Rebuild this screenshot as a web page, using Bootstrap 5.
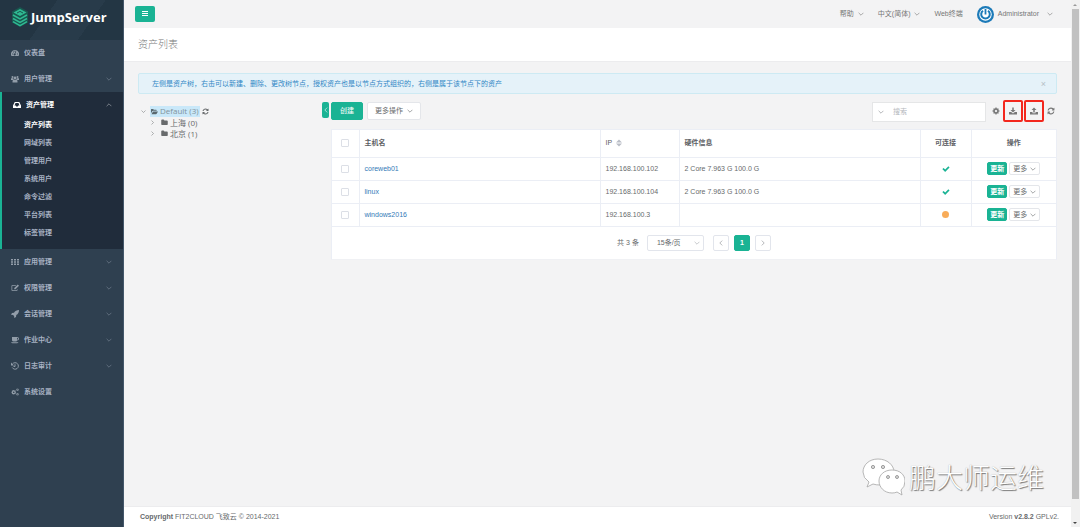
<!DOCTYPE html>
<html lang="zh-CN">
<head>
<meta charset="utf-8">
<meta name="viewport" content="width=device-width, initial-scale=1">
<title>JumpServer - 资产列表</title>
<link href="https://cdn.jsdelivr.net/npm/bootstrap@5.3.0/dist/css/bootstrap.min.css" rel="stylesheet">
<script src="https://cdn.jsdelivr.net/npm/bootstrap@5.3.0/dist/js/bootstrap.bundle.min.js"></script>
<style>
:root { --brand: #1ab394; --ink: #676a6c; --edge: #ebeef5; }
body { font: 7px/10px "Liberation Sans", "Noto Sans CJK SC", sans-serif; color: var(--ink); background: #f3f3f4; }
a { color: inherit; text-decoration: none; }
h1, ul, p { margin: 0; padding: 0; }
ul { list-style: none; }
svg { display: block; flex: none; }
.ic { width: 8px; height: 8px; fill: currentColor; }
.chev { width: 6px; height: 6px; fill: none; stroke: currentColor; stroke-width: 1; }
.line { fill: none; stroke: currentColor; stroke-width: 2; }
button, input, select { font: inherit; color: inherit; }

.side { width: 124px; background: #2f4050; color: #a7b1c2; font-weight: 600; border-right: 1px solid #44576a; }
.brand { height: 40px; padding-left: 11px; gap: 2px; background: linear-gradient(125deg, #233543 0 38%, #283b4a 38% 70%, #233644 70%); color: #fff; font: 700 13px/18px "Open Sans", sans-serif; padding-bottom: 6px; }
.side-item { height: 26px; padding: 0 11px; gap: 5px; }
.side-item .chev { margin-left: auto; opacity: .65; }
.side-item .ic { color: #929da9; }
.side-open { background: #202c3b; border-left: 2px solid var(--brand); padding-bottom: 7px; }
.side-open .side-item { height: 24px; padding-top: 2px; color: #fff; }
.side-open .side-item .ic { color: #fff; }
.side-open li a { display: flex; align-items: center; height: 18px; padding-left: 22px; }
.side-open li a.active { color: #fff; }

.topbar { height: 28px; padding: 0 18px 0 11px; color: #777; }
.topnav { gap: 14px; }
.menu-btn { width: 20px; height: 16px; border: 0; border-radius: 2px; background: var(--brand); color: #fff; }
.heading { height: 34px; padding: 0 14px; background: #fff; border-bottom: 1px solid #ececee; }
.heading h1 { font-size: 10px; line-height: 16px; font-weight: 300; color: #777; }
.content { padding: 11px 14px 0; }
.tip { height: 21px; padding: 0 10px 0 13px; border: 1px solid #cdeaf3; border-radius: 2px; background: #e5f2f9; color: #2f86c5; }
.tip button { border: 0; background: none; padding: 0; color: #b6c0c6; font-size: 9px; }
.tree { width: 184px; padding: 3px 0 0 3px; font-family: "Open Sans", "Noto Sans CJK SC", sans-serif; font-size: 8px; }
.tree .node { height: 12px; gap: 2px; }
.tree .node + .node { height: 11px; }
.tree .sub { padding-left: 9px; }
.tree .chev { width: 5px; height: 5px; margin-right: 2px; }
.tree .sub .chev { margin-right: 4px; }
.tree .ic { width: 7px; height: 7px; }
.tree .on { background: #c9e8f9; height: 11px; padding: 0 1px; gap: 2px; color: #82939c; }
.tree .on .ic { color: #59676e; }
.fold { width: 7px; height: 16px; border: 0; border-radius: 2px; padding: 0; margin-right: 2px; background: var(--brand); color: #fff; }
.tools { height: 27px; }
.act { height: 18px; border: 1px solid #e4e6ea; border-radius: 2px; background: #fff; padding: 0 7px; gap: 4px; }
.act.main { background: var(--brand); border-color: var(--brand); color: #fff; }
.find { width: 114px; height: 20px; border: 1px solid #e5e6e7; background: #fff; padding: 0 5px; }
.find button { border: 0; background: none; padding: 0; color: #85888d; }
.find input { width: 80px; border: 0; padding: 0; margin-left: 9px; outline: 0; background: none; }
.find input::placeholder { color: #b5b8bd; }
.icons { height: 18px; gap: 1px; }
.tool { width: 12px; height: 18px; border: 0; padding: 0; background: none; color: #777; }
.tool.marked { width: 20px; height: 22px; border: 2px solid #f3271d; border-radius: 2px; }
.panel { background: #fff; border: 1px solid var(--edge); border-bottom-color: #f0f1f4; }
.assets { width: 100%; table-layout: fixed; border-collapse: collapse; margin: 0; }
.assets th, .assets td { border: 1px solid var(--edge); border-width: 0 1px 1px 0; height: 23px; padding: 0 5px; vertical-align: middle; }
.assets th { height: 27px; font-weight: 600; color: #5d6064; }
.assets th.thin { font-weight: 400; }
.assets tr > :last-child { border-right: 0; }
.assets a { color: #337ab7; }
.assets input { appearance: none; display: block; width: 8px; height: 8px; margin: 0 auto; border: 1px solid #dcdfe6; border-radius: 1px; background: #fff; }
.mini { height: 13px; border: 1px solid #e4e6ea; border-radius: 2px; background: #fff; padding: 0 2px; gap: 3px; }
.mini + .mini { margin-left: 2px; padding: 0 3px; }
.mini.main { background: var(--brand); border-color: var(--brand); color: #fff; font-weight: 600; }
.dot { width: 7px; height: 7px; border-radius: 50%; background: #f8ac59; }
.pages { height: 32px; }
.pages button, .pages select { height: 16px; border: 1px solid #e2e5ec; border-radius: 2px; background: #fff; padding: 0; }
.pages button { width: 16px; color: #85888d; margin-left: 5px; }
.pages button.now { background: var(--brand); border-color: var(--brand); color: #fff; font-weight: 700; }
.pages select { width: 57px; appearance: none; padding-left: 9px; }
.pages .drop { position: absolute; right: 4px; top: 5px; color: #a5a8ad; pointer-events: none; }
.foot { height: 21px; padding: 0 12px 0 16px; background: #fff; border-top: 1px solid #ececee; }
.foot b { font-weight: 700; }
.rail { width: 9px; background: #f1f1f1; color: #555; padding: 0 1px; }
.rail .thumb { background: #c1c1c1; flex: 0 1 490px; width: 7px; }
.rail svg { width: 6px; height: 9px; }
.sign { padding: 0 27px 10px; gap: 4px; font: 300 27px/36px "Noto Sans CJK SC", sans-serif; color: #fff; text-shadow: 1px 1px 1px #777, 0 0 1px #aaa; }
.sign svg { width: 43px; height: 38px; }
</style>
</head>
<body>
<svg class="d-none" aria-hidden="true">
<symbol id="down" viewBox="0 0 10 10"><path d="M1 3l4 4 4-4"/></symbol>
<symbol id="up" viewBox="0 0 10 10"><path d="M1 7l4-4 4 4"/></symbol>
<symbol id="right" viewBox="0 0 10 10"><path d="M3 1l4 4-4 4"/></symbol>
<symbol id="left" viewBox="0 0 10 10"><path d="M7 1L3 5l4 4"/></symbol>
<symbol id="dash" viewBox="0 0 16 16"><path fill-rule="evenodd" d="M8 2a8 8 0 0 0-7 12h14A8 8 0 0 0 8 2zM3.200 9a1 1 0 1 0 .1 0zM5 5a1 1 0 1 0 .1 0zM8 3.500a1 1 0 1 0 .1 0zM12.800 9a1 1 0 1 0 .1 0zM10.500 5.500L8.600 9.500a2 2 0 1 1-1.300-.5l2-4z"/></symbol>
<symbol id="users" viewBox="0 0 16 16"><circle cx="3" cy="4" r="2"/><circle cx="13" cy="4" r="2"/><circle cx="8" cy="6" r="2.800"/><path d="M0 10V8q0-2 2-2 1 .8 2.500.6Q4.300 8.500 5 9.500 3.500 9.500 3 10zM16 10V8q0-2-2-2-1 .8-2.500.6.2 1.900-.5 2.900 1.500 0 2 .5zM3 15v-2q0-4 2.500-4 2.500 1.500 5 0Q13 9 13 13v2z"/></symbol>
<symbol id="inbox" viewBox="0 0 16 16"><path fill-rule="evenodd" d="M3.500 2h9L16 9v5H0V9zM5 4L3 9h2.500l1 2h3l1-2H13l-2-5z"/></symbol>
<symbol id="grid" viewBox="0 0 16 16"><path d="M0 2h4v3H0zM6 2h4v3H6zM12 2h4v3h-4zM0 6.500h4v3H0zM6 6.500h4v3H6zM12 6.500h4v3h-4zM0 11h4v3H0zM6 11h4v3H6zM12 11h4v3h-4z"/></symbol>
<symbol id="edit" viewBox="0 0 16 16"><path d="M10 2H3Q1 2 1 4v8q0 2 2 2h8q2 0 2-2v-2l-1.500 1.300V12.500H2.500v-9h7zM13.500 1L16 3.500 9 10.500H6.500V8z"/></symbol>
<symbol id="rocket" viewBox="0 0 16 16"><path d="M16 0Q9 0 6 5.500L2 6 0 9.500l4 .3L6.200 12l.3 4L10 14l.5-4Q16 7 16 0z"/></symbol>
<symbol id="cup" viewBox="0 0 16 16"><path fill-rule="evenodd" d="M2 2h10.500a3 3 0 0 1 0 7H12q0 2-2 2H5q-2 0-3-2zM12 3.500v4a2 2 0 0 0 0-4zM0 12.500h15q-1 2-3 2H3q-2 0-3-2z"/></symbol>
<symbol id="history" viewBox="0 0 16 16"><path class="line" d="M3 4a6.500 6.500 0 1 1-.5 7M8 4.500V9H5"/><path d="M0 1v6h6z"/></symbol>
<symbol id="cog" viewBox="0 0 1792 1792"><path d="M1152 896q0-106-75-181t-181-75-181 75-75 181 75 181 181 75 181-75 75-181zm512-109v222q0 12-8 23t-20 13l-185 28q-19 54-39 91 35 50 107 138 10 12 10 25t-9 23q-27 37-99 108t-94 71q-12 0-26-9l-138-108q-44 23-91 38-16 136-29 186-7 28-36 28h-222q-14 0-24.500-8.500t-11.500-21.500l-28-184q-49-16-90-37l-141 107q-10 9-25 9-14 0-25-11-126-114-165-168-7-10-7-23 0-12 8-23 15-21 51-66.500t54-70.500q-27-50-41-99l-183-27q-13-2-21-12.500t-8-23.500v-222q0-12 8-23t19-13l186-28q14-46 39-92-40-57-107-138-10-12-10-24 0-10 9-23 26-36 98.500-107.500t94.500-71.500q13 0 26 10l138 107q44-23 91-38 16-136 29-186 7-28 36-28h222q14 0 24.500 8.500t11.500 21.500l28 184q49 16 90 37l142-107q9-9 24-9 13 0 25 10 129 119 165 170 7 8 7 22 0 12-8 23-15 21-51 66.500t-54 70.500q26 50 41 98l183 28q13 2 21 12.500t8 23.500z"/></symbol>
<symbol id="cogs" viewBox="0 0 16 16"><use href="#cog" y="3" width="11" height="11"/><use href="#cog" x="10" width="6" height="7"/><use href="#cog" x="10" y="9" width="6" height="7"/></symbol>
<symbol id="sync" viewBox="0 0 1792 1792"><path d="M1639 1056q0 5-1 7-64 268-268 434.500t-478 166.500q-146 0-282.500-55t-243.500-157l-129 129q-19 19-45 19t-45-19-19-45v-448q0-26 19-45t45-19h448q26 0 45 19t19 45-19 45l-137 137q71 66 161 102t187 36q134 0 250-65t186-179q11-17 53-117 8-23 30-23h192q13 0 22.500 9.500t9.500 22.500zm25-800v448q0 26-19 45t-45 19h-448q-26 0-45-19t-19-45 19-45l138-138q-148-137-349-137-134 0-250 65t-186 179q-11 17-53 117-8 23-30 23h-199q-13 0-22.500-9.500t-9.500-22.500v-7q65-268 270-434.500t480-166.500q146 0 284 55.500t245 156.500l130-129q19-19 45-19t45 19 19 45z"/></symbol>
<symbol id="tick" viewBox="0 0 1792 1792"><path d="M1671 566q0 40-28 68l-724 724-136 136q-28 28-68 28t-68-28l-136-136-362-362q-28-28-28-68t28-68l136-136q28-28 68-28t68 28l294 295 656-657q28-28 68-28t68 28l136 136q28 28 28 68z"/></symbol>
<symbol id="folder" viewBox="0 0 1792 1792"><path d="M1728 608v704q0 92-66 158t-158 66h-1216q-92 0-158-66t-66-158v-960q0-92 66-158t158-66h320q92 0 158 66t66 158v32h672q92 0 158 66t66 158z"/></symbol>
<symbol id="opened" viewBox="0 0 16 16"><path d="M0 12V3q0-1 1-1h4l1.500 2H12q1 0 1 1v1.500H5q-1.500 0-2.500 1.500zM1 14l3-5q.6-1 1.500-1H16l-3 5q-.6 1-1.500 1z"/></symbol>
<symbol id="download" viewBox="0 0 16 16"><path d="M6.500 1h3v5H13l-5 5-5-5h3.500zM0 10h4.500L7 12.500h2L11.500 10H16v5H0z"/></symbol>
<symbol id="upload" viewBox="0 0 16 16"><path d="M6.500 11h3V6H13L8 1 3 6h3.500zM0 10h5v2.500h6V10h5v5H0z"/></symbol>
</svg>
<div class="d-flex min-vh-100">
  <nav class="side flex-shrink-0" aria-label="主菜单">
    <a class="brand d-flex align-items-center" href="#">
      <svg width="18" height="22" viewBox="0 0 18 22"><path d="M9 1l8 4.500v11L9 21l-8-4.500v-11z" fill="#19574f"/><path d="M2.500 6.500L9 3l6.500 3.500L9 10z" fill="#2fba93"/><path d="M5.500 6.500L9 8.300l3.500-1.800M2 9l7 4 7-4M2 12.500l7 4 7-4M2 15.700l7 4 7-4" fill="none" stroke="#2fba93" stroke-width="1.500"/><path d="M6 7l3-1.600L12 7" fill="none" stroke="#19574f"/></svg>
      <span>JumpServer</span></a>
    <a class="side-item d-flex align-items-center" href="#"><svg class="ic"><use href="#dash"/></svg>仪表盘</a>
    <a class="side-item d-flex align-items-center" href="#"><svg class="ic"><use href="#users"/></svg>用户管理<svg class="chev"><use href="#down"/></svg></a>
    <div class="side-open">
      <a class="side-item d-flex align-items-center" href="#"><svg class="ic"><use href="#inbox"/></svg>资产管理<svg class="chev"><use href="#up"/></svg></a>
      <ul>
        <li><a class="active" href="#">资产列表</a></li>
        <li><a href="#">网域列表</a></li>
        <li><a href="#">管理用户</a></li>
        <li><a href="#">系统用户</a></li>
        <li><a href="#">命令过滤</a></li>
        <li><a href="#">平台列表</a></li>
        <li><a href="#">标签管理</a></li>
      </ul>
    </div>
    <a class="side-item d-flex align-items-center" href="#"><svg class="ic"><use href="#grid"/></svg>应用管理<svg class="chev"><use href="#down"/></svg></a>
    <a class="side-item d-flex align-items-center" href="#"><svg class="ic"><use href="#edit"/></svg>权限管理<svg class="chev"><use href="#down"/></svg></a>
    <a class="side-item d-flex align-items-center" href="#"><svg class="ic"><use href="#rocket"/></svg>会话管理<svg class="chev"><use href="#down"/></svg></a>
    <a class="side-item d-flex align-items-center" href="#"><svg class="ic"><use href="#cup"/></svg>作业中心<svg class="chev"><use href="#down"/></svg></a>
    <a class="side-item d-flex align-items-center" href="#"><svg class="ic"><use href="#history"/></svg>日志审计<svg class="chev"><use href="#down"/></svg></a>
    <a class="side-item d-flex align-items-center" href="#"><svg class="ic"><use href="#cogs"/></svg>系统设置</a>
  </nav>
  <div class="d-flex flex-column flex-grow-1">
    <header class="topbar d-flex align-items-center">
      <button class="menu-btn d-flex align-items-center justify-content-center p-0 me-auto" aria-label="折叠菜单"><svg width="6" height="6" viewBox="0 0 6 6"><path d="M0 0h6v1H0zM0 2h6v1H0zM0 4h6v1H0z" fill="#fff"/></svg></button>
      <div class="topnav d-flex align-items-center">
        <a class="d-flex align-items-center gap-1" href="#">帮助<svg class="chev"><use href="#down"/></svg></a>
        <a class="d-flex align-items-center gap-1" href="#">中文(简体)<svg class="chev"><use href="#down"/></svg></a>
        <a href="#">Web终端</a>
        <a class="d-flex align-items-center gap-1" href="#"><svg width="17" height="17" viewBox="0 0 17 17"><circle cx="8.500" cy="8.500" r="8.500" fill="#1c7ab8"/><circle cx="8.500" cy="8.500" r="6.200" fill="#fff"/><path d="M6 4.800a4.300 4.300 0 1 0 5 0" fill="none" stroke="#1c7ab8" stroke-width="2"/><path d="M7.600 3h1.800v5.500H7.600z" fill="#1c7ab8"/></svg>Administrator<svg class="chev ms-1"><use href="#down"/></svg></a>
      </div>
    </header>
    <div class="heading d-flex align-items-center"><h1>资产列表</h1></div>
    <main class="content flex-grow-1">
      <div class="tip d-flex align-items-center justify-content-between" role="alert"><span>左侧是资产树，右击可以新建、删除、更改树节点，授权资产也是以节点方式组织的，右侧是属于该节点下的资产</span><button aria-label="关闭">×</button></div>
      <div class="d-flex pt-2">
        <div class="tree flex-shrink-0">
          <div class="node d-flex align-items-center"><svg class="chev"><use href="#down"/></svg><a class="on d-flex align-items-center" href="#"><svg class="ic"><use href="#opened"/></svg>Default (3)</a><svg class="ic"><use href="#sync"/></svg></div>
          <div class="node sub d-flex align-items-center"><svg class="chev"><use href="#right"/></svg><svg class="ic"><use href="#folder"/></svg><a href="#">上海 (0)</a></div>
          <div class="node sub d-flex align-items-center"><svg class="chev"><use href="#right"/></svg><svg class="ic"><use href="#folder"/></svg><a href="#">北京 (1)</a></div>
        </div>
        <button class="fold d-flex align-items-center justify-content-center flex-shrink-0" aria-label="收起资产树"><svg class="chev"><use href="#left"/></svg></button>
        <div class="flex-grow-1">
          <div class="tools d-flex align-items-start">
            <button class="act main px-2">创建</button>
            <button class="act d-flex align-items-center ms-1">更多操作<svg class="chev"><use href="#down"/></svg></button>
            <div class="find d-flex align-items-center ms-auto me-1"><button aria-label="筛选"><svg class="chev"><use href="#down"/></svg></button><input type="search" placeholder="搜索" aria-label="搜索"></div>
            <div class="icons d-flex align-items-center">
              <button class="tool d-flex align-items-center justify-content-center" aria-label="设置"><svg class="ic"><use href="#cog"/></svg></button>
              <button class="tool marked d-flex align-items-center justify-content-center" aria-label="导出"><svg class="ic"><use href="#download"/></svg></button>
              <button class="tool marked d-flex align-items-center justify-content-center" aria-label="导入"><svg class="ic"><use href="#upload"/></svg></button>
              <button class="tool d-flex align-items-center justify-content-center" aria-label="刷新"><svg class="ic"><use href="#sync"/></svg></button>
            </div>
          </div>
          <div class="panel">
            <table class="assets">
              <colgroup><col width="27"><col><col width="79"><col><col width="51"><col width="85"></colgroup>
              <thead><tr><th><input type="checkbox" aria-label="全选"></th><th>主机名</th><th class="thin"><span class="d-flex align-items-center gap-1">IP <svg width="6" height="8" viewBox="0 0 6 8" fill="#b9bdc6"><path d="M0 3.500L3 .5l3 3zM0 4.500h6l-3 3z"/></svg></span></th><th>硬件信息</th><th class="text-center">可连接</th><th class="text-center">操作</th></tr></thead>
              <tbody>
                <tr><td><input type="checkbox" aria-label="coreweb01"></td><td><a href="#">coreweb01</a></td><td>192.168.100.102</td><td>2 Core 7.963 G 100.0 G</td><td><svg class="ic mx-auto" color="#1ab394"><use href="#tick"/></svg></td><td><div class="d-flex justify-content-center"><button class="mini main">更新</button><button class="mini d-flex align-items-center">更多<svg class="chev"><use href="#down"/></svg></button></div></td></tr>
                <tr><td><input type="checkbox" aria-label="linux"></td><td><a href="#">linux</a></td><td>192.168.100.104</td><td>2 Core 7.963 G 100.0 G</td><td><svg class="ic mx-auto" color="#1ab394"><use href="#tick"/></svg></td><td><div class="d-flex justify-content-center"><button class="mini main">更新</button><button class="mini d-flex align-items-center">更多<svg class="chev"><use href="#down"/></svg></button></div></td></tr>
                <tr><td><input type="checkbox" aria-label="windows2016"></td><td><a href="#">windows2016</a></td><td>192.168.100.3</td><td></td><td><div class="dot mx-auto"></div></td><td><div class="d-flex justify-content-center"><button class="mini main">更新</button><button class="mini d-flex align-items-center">更多<svg class="chev"><use href="#down"/></svg></button></div></td></tr>
              </tbody>
            </table>
            <div class="pages d-flex align-items-center justify-content-center">
              <span class="me-2">共 3 条</span>
              <div class="position-relative me-1"><select aria-label="每页条数"><option>15条/页</option></select><svg class="chev drop"><use href="#down"/></svg></div>
              <button class="d-flex align-items-center justify-content-center" aria-label="上一页"><svg class="chev"><use href="#left"/></svg></button>
              <button class="now">1</button>
              <button class="d-flex align-items-center justify-content-center" aria-label="下一页"><svg class="chev"><use href="#right"/></svg></button>
            </div>
          </div>
        </div>
      </div>
    </main>
    <div class="sign d-flex align-items-center justify-content-end">
      <svg viewBox="0 0 43 38"><g fill="#fff" stroke="#a5a5a5" stroke-width=".8"><path d="M16 1C7 1 1 7 1 14q0 6 6 10l-2 5 6-3q3 1 7 1c8 0 14-6 14-13S25 1 16 1z"/><path d="M30 12c-8 0-13 5-13 11s5 12 13 12q3 0 5-1l5 3-1-5q4-3 4-9c0-6-5-11-13-11z"/></g><g fill="#ddd" stroke="#888" stroke-width=".8"><circle cx="11" cy="9" r="1.600"/><circle cx="21" cy="9" r="1.600"/><circle cx="26" cy="19" r="1.500"/><circle cx="35" cy="19" r="1.500"/></g></svg>
      <span>鹏大师运维</span>
    </div>
    <footer class="foot d-flex align-items-center justify-content-between"><span><b>Copyright</b> FIT2CLOUD 飞致云 © 2014-2021</span><span>Version <b>v2.8.2</b> GPLv2.</span></footer>
  </div>
  <div class="rail d-flex flex-column flex-shrink-0" aria-hidden="true">
    <svg viewBox="0 0 6 9"><path d="M1 6l2-2 2 2z" fill="#999"/></svg>
    <div class="thumb"></div>
    <svg class="mt-auto" viewBox="0 0 6 9"><path d="M1 4l2 2 2-2z" fill="#444"/></svg>
  </div>
</div>
</body>
</html>
